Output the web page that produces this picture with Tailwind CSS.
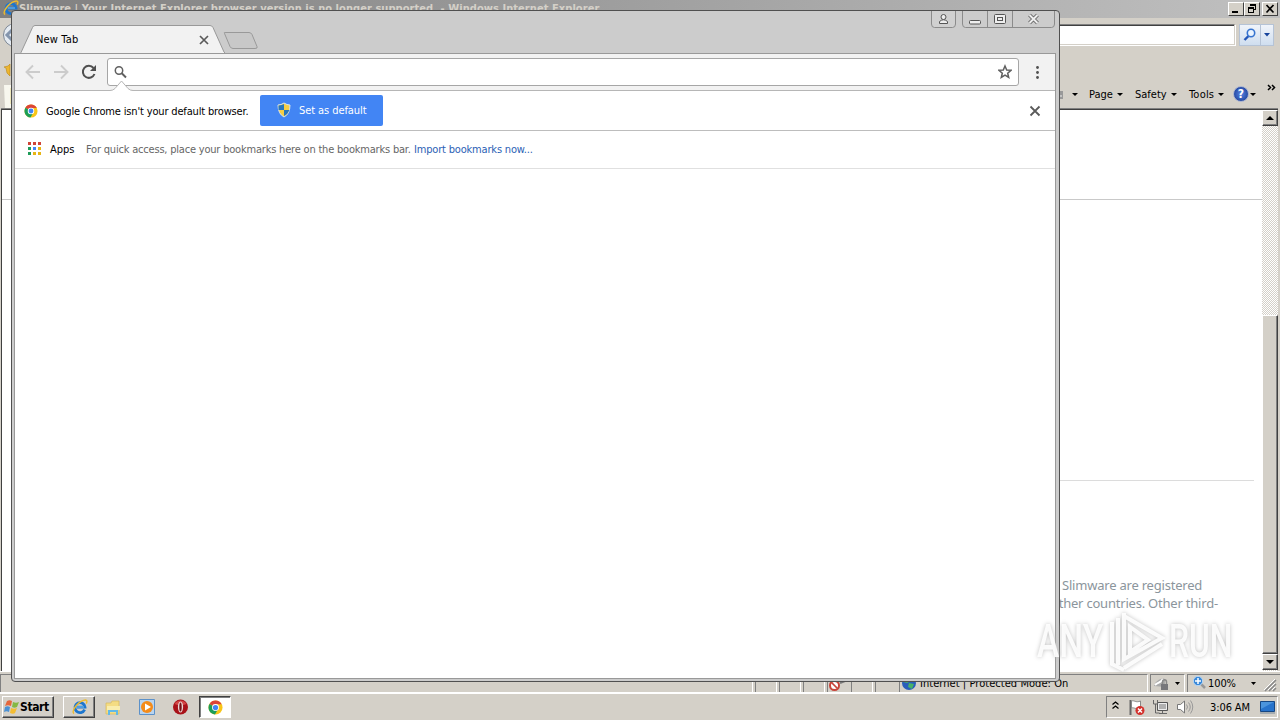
<!DOCTYPE html>
<html lang="en">

<head>
  <meta charset="UTF-8">
  <meta name="viewport" content="width=device-width, initial-scale=1.0">
  <title>New Tab</title>
  <script src="https://cdn.jsdelivr.net/npm/@tailwindcss/browser@4"></script>
</head>

<body class="w-[1280px] h-[720px] overflow-hidden bg-[#d4d0c8] text-black text-[11px] leading-[14px] font-['DejaVu_Sans_Condensed','DejaVu_Sans',sans-serif]">
  <svg class="hidden">
    <symbol id="chrome" viewBox="0 0 16 16">
      <circle cx="8" cy="8" r="7.5" fill="#f8c517" />
      <path d="M8 8L1.6 4.2A7.5 7.5 0 0 1 14.6 4.6H8z" fill="#dc4437" />
      <path d="M8 8L1.6 4.2A7.5 7.5 0 0 0 7.4 15.5L10.8 9.5z" fill="#1b9e58" />
      <circle cx="8" cy="8" r="3.7" fill="#fff" />
      <circle cx="8" cy="8" r="2.8" fill="#4285f4" />
    </symbol>
    <symbol id="ie" viewBox="0 0 16 16">
      <path d="M12.6 10.6A5 5 0 1 1 13 8.2H5" fill="none" stroke="#1c76cf" stroke-width="2.8" />
      <path d="M12 8H5" stroke="#7cc4f5" stroke-width="1" />
      <path d="M2 14.6C-1 12.5 5 3.5 11.5 1.3C15 .2 15.5 2 14.3 4.6" fill="none" stroke="#eebb2c" stroke-width="1.4" />
    </symbol>
  </svg>

  <!-- Internet Explorer window -->
  <div class="flex flex-col w-[1280px] h-[692px]">
    <div class="flex h-[18px] shrink-0 justify-between bg-linear-to-r from-[#808080] to-[#c0c0c0] pl-[3px] pr-[2px]">
      <div class="flex items-start">
        <svg class="w-4 h-4"><use href="#ie" /></svg>
        <span class="mt-[2px] font-bold text-[#d4d0c8] whitespace-nowrap tracking-[0.06px]">Slimware | Your Internet Explorer browser version is no longer supported. - Windows Internet Explorer</span>
      </div>
      <div class="flex mt-[2px] h-[14px]">
        <div class="w-4 bg-[#d4d0c8] border border-t-white border-l-white border-r-[#404040] border-b-[#404040]">
          <div class="w-[6px] h-[2px] bg-black mt-[8px] ml-[3px]"></div>
        </div>
        <div class="w-4 bg-[#d4d0c8] border border-t-white border-l-white border-r-[#404040] border-b-[#404040]">
          <svg class="w-[14px] h-3" fill="none" stroke="#000" shape-rendering="crispEdges"><path d="M5 1h6v2H5zM10 3h1v4h-1zM8 6h3v1H8zM3 4h6v2H3zM3 6h1v4H3zM8 6h1v4H8zM3 9h6v1H3z" fill="#000" stroke="none" /></svg>
        </div>
        <div class="w-4 ml-[2px] bg-[#d4d0c8] border border-t-white border-l-white border-r-[#404040] border-b-[#404040]">
          <svg class="w-[14px] h-3" stroke="#000" stroke-width="1.700"><path d="M3.500 2l7 7.500M10.500 2l-7 7.500" /></svg>
        </div>
      </div>
    </div>

    <!-- address row -->
    <div class="flex h-[42px] shrink-0 justify-between pt-[6px] pr-[6px]">
      <svg class="w-6 h-6"><circle cx="15" cy="11" r="11.500" fill="#e4eaf1" stroke="#7d8794" /><path d="M14 4L7 11l7 7" fill="none" stroke="#8495ad" stroke-width="3" /></svg>
      <div class="flex">
        <div class="w-[240px] h-[21px] bg-white border border-t-[#808080] border-r-[#d4d0c8] border-b-[#d4d0c8] shadow-[inset_0_1px_0_#404040,1px_1px_0_#fff]"></div>
        <div class="flex ml-[4px] w-[35px] h-[22px] border border-[#b5c3d6] bg-linear-to-b from-[#f0f4fa] to-[#cfdeef]">
          <svg class="w-[21px] h-5 border-r border-[#b5c3d6]" fill="none"><path d="M8.500 11l-4 4" stroke="#2456b8" stroke-width="2.400" /><circle cx="11" cy="8" r="3.700" fill="#eaf4ff" stroke="#3674d0" stroke-width="1.600" /></svg>
          <svg class="w-3 h-5"><path d="M3 8h6l-3 3.500z" fill="#16449c" /></svg>
        </div>
      </div>
    </div>

    <!-- command bar -->
    <div class="flex h-[49px] shrink-0 justify-between pr-[4px]">
      <svg class="w-3 h-[49px]"><path d="M10 4v12l-3-3-1-5-2-1 4-1z" fill="#edb630" stroke="#b98616" stroke-width=".6" /><path d="M4 25h8v23H5z" fill="#f8f7ee" /><path d="M10 28h2v16h-2z" fill="#efe9bd" /></svg>
      <div class="flex pt-[28px]">
        <svg class="w-[10px] h-[14px] mr-[7px] -mt-px"><path d="M0 4h8v8H0z" fill="#999" /><path d="M1 6h4M3 9h4" stroke="#eee" /></svg>
        <svg class="w-[7px] h-[14px] mr-[10px]"><path d="M0 5h6L3 8z" /></svg>
        <span class="w-[26px]">Page</span>
        <svg class="w-[7px] h-[14px] mr-[11px] ml-[2px]"><path d="M0 5h6L3 8z" /></svg>
        <span class="w-[34px]">Safety</span>
        <svg class="w-[7px] h-[14px] mr-[11px] ml-[2px]"><path d="M0 5h6L3 8z" /></svg>
        <span class="w-[27px] tracking-[0.2px]">Tools</span>
        <svg class="w-[7px] h-[14px] mr-[8px] ml-[2px]"><path d="M0 5h6L3 8z" /></svg>
        <div class="w-[16px] h-[16px] -mt-[2px] rounded-full bg-radial from-[#5785e4] to-[#15338c] border border-[#aab4d0] text-white text-[12px] font-bold text-center">?</div>
        <svg class="w-[7px] h-[14px] mr-[10px] ml-[1px]"><path d="M0 5h6L3 8z" /></svg>
        <svg class="w-[9px] h-[10px] -mt-[5px]" fill="none" stroke="#000" stroke-width="1.500"><path d="M1 2l2.500 2.500L1 7M5 2l2.500 2.500L5 7" /></svg>
      </div>
    </div>

    <!-- page -->
    <div class="flex h-[562px] shrink-0 ml-[1px] mr-[2px] border-t border-l border-[#404040] shadow-[0_-1px_0_#808080]">
      <div class="flex flex-col w-[1260px] bg-white text-[13px] leading-[18px] text-[#8b959c] font-['Noto_Sans',sans-serif]">
        <div class="h-[90px] shrink-0 border-b border-[#c9c9c9]"></div>
        <div class="h-[281px] shrink-0 mr-2 ml-10 border-b border-[#dcdcdc]"></div>
        <div class="pt-[95px] pl-[1060px] whitespace-nowrap tracking-[-0.21px]">
          <p>Slimware are registered</p>
          <p class="-ml-[11px]">other countries. Other third-</p>
        </div>
      </div>
      <div class="flex flex-col w-4 bg-[#e9e7e3] bg-[repeating-conic-gradient(#d4d0c8_0_25%,#fff_0_50%)] bg-[length:2px_2px]">
        <div class="h-4 shrink-0 bg-[#d4d0c8] border border-t-white border-l-white border-r-[#404040] border-b-[#404040] shadow-[inset_-1px_-1px_0_#808080]">
          <svg class="w-[14px] h-[14px]"><path d="M3 9h8L7 5z" /></svg>
        </div>
        <div class="h-[189px] shrink-0"></div>
        <div class="grow bg-[#d4d0c8] border border-t-white border-l-white border-r-[#404040] border-b-[#404040] shadow-[inset_-1px_-1px_0_#808080]"></div>
        <div class="h-4 mb-[1px] shrink-0 bg-[#d4d0c8] border border-t-white border-l-white border-r-[#404040] border-b-[#404040] shadow-[inset_-1px_-1px_0_#808080]">
          <svg class="w-[14px] h-[14px]"><path d="M3 5h8L7 9z" /></svg>
        </div>
      </div>
    </div>

    <!-- status bar -->
    <div class="flex grow border-t border-white pt-[2px] pb-[1px]">
      <div class="w-[753px] border-l border-t border-[#808080] border-r border-r-white"></div>
      <div class="w-[22px] ml-[2px] border-l border-[#808080] border-r border-r-white"></div>
      <div class="w-[22px] ml-[2px] border-l border-[#808080] border-r border-r-white"></div>
      <div class="w-[22px] ml-[2px] border-l border-[#808080] border-r border-r-white"></div>
      <div class="w-[24px] ml-[2px] border-l border-[#808080]">
        <svg class="w-5 h-[17px]" fill="none"><circle cx="6.500" cy="11.500" r="4.500" fill="#fff" stroke="#c84339" stroke-width="2" /><path d="M3.500 8.500l6 6" stroke="#c84339" stroke-width="1.700" /><path d="M12 9l5-2" stroke="#777" stroke-width="2" /></svg>
      </div>
      <div class="w-[22px] border-l border-[#808080] border-r border-r-white"></div>
      <div class="w-[22px] ml-[2px] border-l border-[#808080]"></div>
      <div class="flex w-[249px] ml-[2px] border-l border-t border-[#808080] border-r border-r-white">
        <svg class="w-[17px] h-4 ml-[1px]"><circle cx="8" cy="8" r="7" fill="#285dbb" /><path d="M4 2l5 0 1 4-4 2-4-1zM8 8l5 1-2 5-4-2zM12 3l2 4-3-1z" fill="#46b267" /></svg>
        <span class="ml-[2px] mt-[2px] whitespace-nowrap tracking-[0.05px]">Internet | Protected Mode: On</span>
      </div>
      <div class="flex w-[35px] ml-[2px] border-l border-t border-[#808080] border-r border-r-white">
        <svg class="w-[19px] h-4 ml-[2px]"><path d="M1 11c1-5 8-9 11-7v8z" fill="#aaa" /><path d="M2 10c3-3 6-2 8-6" stroke="#fff" fill="none" stroke-width="2" /><path d="M8 9h7v6H8z" fill="#77777b" /><path d="M9.500 9V7c0-3 4-3 4 0v2" stroke="#888" fill="none" stroke-width="1.500" /></svg>
        <svg class="w-[7px] h-4 ml-[2px]"><path d="M1 7h5L3.500 10z" /></svg>
      </div>
      <div class="flex grow ml-[2px] border-l border-t border-[#808080]">
        <svg class="w-4 h-4 ml-[4px]"><path d="M8 8l5 5" stroke="#999" stroke-width="2.500" /><circle cx="6" cy="6" r="4.700" fill="#3988d8" stroke="#bcd9f4" /><path d="M3 6h6M6 3v6" stroke="#fff" stroke-width="1.500" /></svg>
        <span class="mt-[2px] w-[42px] tracking-[-0.1px]">100%</span>
        <svg class="w-[7px] h-4"><path d="M1 7h5L3.500 10z" /></svg>
        <svg class="w-[13px] h-[17px] ml-[7px]" stroke="#888"><path d="M1 16L12 5M5 16l7-7M9 16l3-3" stroke-width="1.500" /><path d="M0 15L11 4M4 15l7-7M8 15l3-3" stroke="#fff" /></svg>
      </div>
    </div>
  </div>

  <!-- taskbar -->
  <div class="flex h-7 border-t-2 border-white pt-[2px] pl-[2px]">
    <div class="flex w-[52px] h-[22px] border border-t-white border-l-white border-r-[#404040] border-b-[#404040] shadow-[inset_-1px_-1px_0_#808080]">
      <svg class="w-4 h-4 ml-[1px] mt-[2px]"><path d="M3 2c2-1 3-1 5 0L7 7C5 6 3 6 1 7z" fill="#e5673c" /><path d="M9 3c2 1 4 1 6 0l-2 5c-2 1-3 1-5 0z" fill="#85b844" /><path d="M1 8c2-1 3-1 5 0l-1 5c-2-1-3-1-5 0z" fill="#4b91d4" /><path d="M7 9c2 1 4 1 6 0l-2 5c-1 1-3 1-5 0z" fill="#f4bd32" /></svg>
      <span class="mt-[3px] text-[12px] font-bold tracking-[-0.4px]">Start</span>
    </div>
    <div class="flex justify-center items-center w-[32px] h-[22px] ml-[9px] border border-t-white border-l-white border-r-[#404040] border-b-[#404040] shadow-[inset_-1px_-1px_0_#808080]">
      <svg class="w-4 h-4 ml-[2px]"><use href="#ie" /></svg>
    </div>
    <svg class="w-4 h-4 ml-[10px] mt-[4px]"><path d="M1 3h5l1-2h7v13H1z" fill="#f4dc83" stroke="#d6b95f" stroke-width=".7" /><path d="M2 6h13v4H2z" fill="#f9edae" /><path d="M3 14v-4h10v5h-2v-3H5v3H3z" fill="#62b9e7" /></svg>
    <svg class="w-4 h-4 ml-[18px] mt-[3px]"><path d="M.500.500h15v15H.500z" fill="#b9d4ef" stroke="#5c91c9" /><circle cx="8" cy="8" r="6" fill="#f48b19" /><path d="M6 4.500l6 3.500-6 3.500z" fill="#fff" /></svg>
    <svg class="w-4 h-4 ml-[18px] mt-[3px]"><circle cx="7.500" cy="8" r="7.500" fill="#a81118" /><path d="M1.500 5a7 7 0 0 1 12 0l-6 2z" fill="#d24646" /><ellipse cx="7.500" cy="8" rx="2.600" ry="5.500" fill="#ead5d5" /><ellipse cx="7.500" cy="8" rx="1.200" ry="4.600" fill="#741014" /></svg>
    <div class="flex justify-center items-center w-[32px] h-[22px] ml-[10px] bg-white border border-t-[#404040] border-l-[#404040] border-r-white border-b-white shadow-[inset_1px_1px_0_#808080]">
      <svg class="w-[15px] h-[15px]"><use href="#chrome" /></svg>
    </div>
    <div class="flex w-[172px] h-[22px] ml-auto mr-[2px] border border-t-[#808080] border-l-[#808080] border-r-white border-b-white">
      <svg class="w-[9px] h-4 ml-[4px] mt-[1px]" fill="none" stroke="#000" stroke-width="1.300"><path d="M1.500 6.500L4.500 4l3 2.500M1.500 10.500l3-2.500 3 2.500" /></svg>
      <svg class="w-[18px] h-[18px] ml-[8px] mt-[1px]"><path d="M2.500 2v15" stroke="#666" stroke-width="2" /><path d="M3.500 3c3-1 4 2 9 0v7c-5 2-6-1-9 0z" fill="#fff" stroke="#888" /><circle cx="12" cy="12.500" r="4.500" fill="#d3302b" /><path d="M10 10.500l4 4M14 10.500l-4 4" stroke="#fff" stroke-width="1.500" /></svg>
      <svg class="w-[18px] h-[18px] ml-[6px] mt-[1px]" fill="none" stroke="#666"><path d="M5.500 4.500h10v8h-10z" fill="#b0b0b0" stroke="#555" /><path d="M6.500 5.500h8v6h-8z" stroke="#eee" /><path d="M7 15.500h8M10.500 13v2M1.500 2v4h4V2M3.500 6v9h4" /></svg>
      <svg class="w-[18px] h-[18px] ml-[6px] mt-[1px]" fill="none" stroke="#777"><path d="M1.500 6.500h3L8.500 3v12l-4-3.500h-3z" fill="#fff" /><path d="M10.500 6.500q2 2.500 0 5M12.500 4.500q3.500 4.500 0 9M14.500 2.500q4.500 6.500 0 13" stroke="#999" /></svg>
      <span class="ml-[16px] mt-[4px] w-[50px] whitespace-nowrap tracking-[-0.1px]">3:06 AM</span>
      <svg class="w-[15px] h-[15px] mt-[3px]"><path d="M.500 1.500h14v10H.500z" fill="#2773cb" stroke="#164783" /><path d="M1 2h13L1 9z" fill="#70b5ee" opacity=".5" /><path d="M0 13h15" stroke="#789" /></svg>
    </div>
  </div>

  <!-- Chrome window -->
  <div class="absolute left-[11px] top-[10px] flex flex-col w-[1049px] h-[672px] bg-[#ccc] border border-[#505050] rounded-[4px] pl-[2px] pr-[3px] pb-[2px]">
    <div class="flex h-[42px] shrink-0">
      <div class="grid w-[207px] ml-[6px]">
        <svg class="col-start-1 row-start-1 w-[207px] h-[43px]"><path d="M0 43L1 41.500L12.500 16.500Q13.200 14.500 15 14.500H190Q192 14.500 193 16.500L204 41L206 43z" fill="#f2f2f2" stroke="#999" /></svg>
        <div class="col-start-1 row-start-1 flex pt-[22px] pl-[16px]">
          <span class="w-[163px] tracking-[0.15px]">New Tab</span>
          <svg class="w-[10px] h-[10px] mt-[2px]" stroke="#5a5a5a" stroke-width="1.700"><path d="M1 1l8 8M9 1L1 9" /></svg>
        </div>
      </div>
      <svg class="w-9 h-[17px] mt-[21px] -ml-[4px]"><path d="M1.500 1.500Q0 .500 3 .500H26Q28 .500 29 2.500L34 14.500Q35 16.500 32 16.500H10Q8 16.500 7 14.500z" fill="#c8c8c8" stroke="#999" /></svg>
      <div class="flex ml-auto mr-[1px] h-[17px]">
        <svg class="w-[25px] h-[17px] mr-[6px]" fill="none" stroke="#8b8b8b"><path d="M.500 0v13q0 3.500 3 3.500h18q3 0 3-3.500V0" fill="#d0d0d0" /><circle cx="12.500" cy="6" r="2.500" fill="#eee" stroke="#555" /><path d="M8.500 12.500v-2q4-3.500 8 0v2z" fill="#eee" stroke="#555" /></svg>
        <svg class="w-[93px] h-[17px]" fill="none" stroke="#8b8b8b"><path d="M.500 0v13q0 3.500 3 3.500h86q3 0 3-3.500V0M25.500 0v16.500M50.500 0v16.500" /><rect x="7.500" y="9.500" width="11" height="3.500" rx="1" fill="#eee" stroke="#555" /><rect x="32.500" y="3.500" width="11" height="9" rx="1" fill="#eee" stroke="#555" /><rect x="35.500" y="6.500" width="5" height="3" stroke="#555" /><path d="M67.500 4l8 8M75.500 4l-8 8" stroke="#606060" stroke-width="3.800" /><path d="M67.500 4l8 8M75.500 4l-8 8" stroke="#eee" stroke-width="2" /></svg>
      </div>
    </div>

    <div class="flex flex-col grow bg-white border border-[#999]">
      <div class="flex items-start h-[37px] shrink-0 bg-[#f2f2f2] border-b border-[#b6b6b6] pt-[4px] pl-[10px]">
        <svg class="w-4 h-7" fill="none" stroke="#ccc" stroke-width="1.900"><path d="M15 14H2M8 7.500L1.500 14L8 20.500" /></svg>
        <svg class="w-4 h-7 ml-[12px]" fill="none" stroke="#ccc" stroke-width="1.900"><path d="M1 14h13M8 7.500l6.500 6.500L8 20.500" /></svg>
        <svg class="w-4 h-7 ml-[12px]" fill="none" stroke="#505050" stroke-width="2"><path d="M13.500 16A6 6 0 1 1 12.500 10" /><path d="M15 7v6H9z" fill="#505050" stroke="none" /></svg>
        <div class="flex w-[912px] h-[28px] ml-[10px] justify-between bg-white border border-[#a6a6a6] rounded-[3px]">
          <svg class="w-[14px] h-[26px] ml-[6px]" fill="none" stroke="#606060"><circle cx="5" cy="11.500" r="3.700" stroke-width="1.500" /><path d="M7.500 14l4.500 4.500" stroke-width="1.900" /></svg>
          <svg class="w-[14px] h-[26px] mr-[6px]" fill="none" stroke="#606060" stroke-width="1.500"><path d="M7 7l1.700 4 4.300.3-3.300 2.900 1 4.300L7 16.200l-3.700 2.300 1-4.300L1 11.300l4.300-.3z" /></svg>
        </div>
        <svg class="w-[5px] h-7 ml-[16px]" fill="#505050"><circle cx="2.500" cy="9.500" r="1.400" /><circle cx="2.500" cy="14.500" r="1.400" /><circle cx="2.500" cy="19.500" r="1.400" /></svg>
      </div>

      <!-- default browser infobar -->
      <div class="relative flex items-start h-[40px] shrink-0 border-b border-[#bdbdbd] pt-[4px] pl-[8px]">
        <svg class="absolute left-[93px] -top-[11px] w-[28px] h-[12px]"><path d="M2 10.500Q5 10.500 7 8.500L13.500 1L20 8.500Q22 10.500 25 10.500V12H2z" fill="#fff" /><path d="M2 10.500Q5 10.500 7 8.500L13.500 1L20 8.500Q22 10.500 25 10.500" fill="none" stroke="#b6b6b6" /></svg>
        <svg class="w-4 h-4 mt-[8px] p-px"><use href="#chrome" /></svg>
        <span class="w-[214px] ml-[7px] mt-[10px] whitespace-nowrap tracking-[-0.16px]">Google Chrome isn't your default browser.</span>
        <div class="flex w-[123px] h-[31px] bg-[#4285f4] rounded-[2px] text-white">
          <svg class="w-[14px] h-4 ml-[17px] mt-[7px]"><path d="M7 1Q10 3 13 3q0 9-6 12Q1 12 1 3q3 0 6-2z" fill="#f6ce45" stroke="#d9e5e9" /><path d="M7 2v6H1.500V3.500Q5 3 7 2zM7 8h5.500Q11 12 7 14z" fill="#2876bd" /></svg>
          <span class="ml-[8px] mt-[9px] whitespace-nowrap tracking-[-0.08px]">Set as default</span>
        </div>
        <svg class="w-[12px] h-[12px] ml-auto mr-[14px] mt-[10px]" stroke="#5a5a5a" stroke-width="1.800"><path d="M1.500 1.500l9 9M10.500 1.500l-9 9" /></svg>
      </div>

      <!-- bookmarks bar -->
      <div class="flex h-[38px] shrink-0 border-b border-[#e0e0e0] pt-[12px] pl-[13px] whitespace-nowrap">
        <svg class="w-[13px] h-[13px] -mt-px" shape-rendering="crispEdges"><path d="M0 0h3v3H0zM5 0h3v3H5zM10 0h3v3h-3z" fill="#d04437" /><path d="M0 5h3v3H0zM0 10h3v3H0z" fill="#1e9b58" /><path d="M5 5h3v3H5z" fill="#4285f4" /><path d="M10 5h3v3h-3zM5 10h3v3H5zM10 10h3v3h-3z" fill="#e7b514" /></svg>
        <span class="w-[36px] ml-[9px]">Apps</span>
        <span class="w-[328px] text-[#666] tracking-[-0.2px]">For quick access, place your bookmarks here on the bookmarks bar.</span>
        <span class="text-[#2b61b5] tracking-[-0.18px]">Import bookmarks now...</span>
      </div>
    </div>
  </div>

  <!-- watermark -->
  <div class="absolute left-[1037px] top-[609px] flex items-center w-[196px] h-[64px] text-white/90 text-[46px] leading-[64px] font-medium font-['Roboto',sans-serif] drop-shadow-[0_0_2px_#bbbbbb]">
    <span class="w-[71px] origin-left scale-x-[0.73]">ANY</span>
    <svg class="w-[58px] h-[64px] shrink-0" fill="none" stroke="#fff" stroke-opacity=".9" stroke-width="4"><path d="M10 9v47M4 13v42l12 6M16 4v46l38-21L16 7M16 59l38-24M22 18v25l18-12z" /></svg>
    <span class="w-[65px] ml-[3px] origin-left scale-x-[0.69]">RUN</span>
  </div>
</body>

</html>
